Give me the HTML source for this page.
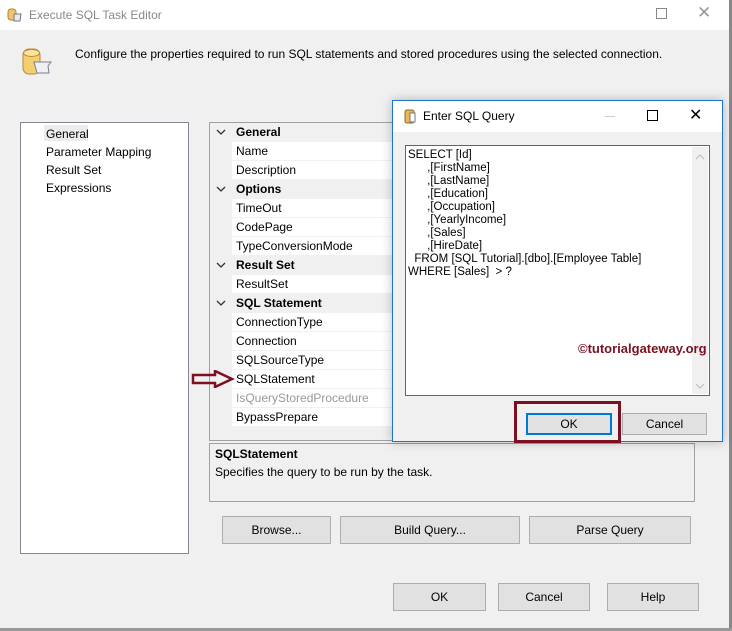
<!DOCTYPE html>
<html><head><style>
*{margin:0;padding:0;box-sizing:border-box}
body{width:732px;height:631px;background:#f0f0f0;font-family:"Liberation Sans",sans-serif;font-size:12px;color:#000;position:relative;overflow:hidden}
.a{position:absolute}
.btn{position:absolute;background:#e1e1e1;border:1px solid #adadad;text-align:center;font-size:12px}
.row{position:absolute;left:0;width:200px;height:19px;line-height:19px}
.cat{background:#f0f0f0;font-weight:bold;padding-left:26px}
.it{background:#fff;margin-left:22px;padding-left:4px;width:178px;border-bottom:1px solid #f0f0f0}
.chev{position:absolute;left:6px;top:6px}
</style></head><body>
<div class="a" style="left:0;top:0;width:732px;height:30px;background:#fff"></div>
<svg class="a" style="left:7px;top:7px" width="16" height="16"><rect x="1" y="2" width="8" height="11" rx="3" fill="#f0c868" stroke="#b08030"/><path d="M7 7h7l-1 7H7z" fill="#e8eaf0" stroke="#778"/></svg>
<div class="a" style="left:29px;top:8px;font-size:12px;color:#888">Execute SQL Task Editor</div>
<div class="a" style="left:656px;top:8px;width:11px;height:11px;border:1px solid #888"></div>
<div class="a" style="left:697px;top:3px;font-size:17px;color:#999">✕</div>
<div class="a" style="left:729px;top:0;width:3px;height:631px;background:#888"></div>
<div class="a" style="left:0;top:628px;width:732px;height:3px;background:#999"></div>
<svg class="a" style="left:22px;top:47px" width="32" height="32"><rect x="1" y="2" width="17" height="25" rx="6" fill="#f4cf70" stroke="#b88a3a"/><ellipse cx="9.5" cy="6" rx="8" ry="3.5" fill="#fae39a" stroke="#b88a3a"/><path d="M12 15h17l-3 4 1 7H15z" fill="#eef0f4" stroke="#7a8090"/></svg>
<div class="a" style="left:75px;top:47px;font-size:12px">Configure the properties required to run SQL statements and stored procedures using the selected connection.</div>
<div class="a" style="left:20px;top:122px;width:169px;height:432px;background:#fff;border:1px solid #828790"></div>
<div class="a" style="left:44px;top:125px;width:44px;height:16px;background:#ececec"></div>
<div class="a" style="left:46px;top:125px;line-height:18px">General<br>Parameter Mapping<br>Result Set<br>Expressions</div>
<div class="a" style="left:209px;top:122px;width:200px;height:319px;background:#f0f0f0;border:1px solid #a0a0a0;overflow:hidden">
<div class="row cat" style="top:0"><svg class="chev" width="10" height="7"><path d="M1 1l4 4 4-4" fill="none" stroke="#333" stroke-width="1.3"/></svg>General</div>
<div class="row it" style="top:19px">Name</div>
<div class="row it" style="top:38px">Description</div>
<div class="row cat" style="top:57px"><svg class="chev" width="10" height="7"><path d="M1 1l4 4 4-4" fill="none" stroke="#333" stroke-width="1.3"/></svg>Options</div>
<div class="row it" style="top:76px">TimeOut</div>
<div class="row it" style="top:95px">CodePage</div>
<div class="row it" style="top:114px">TypeConversionMode</div>
<div class="row cat" style="top:133px"><svg class="chev" width="10" height="7"><path d="M1 1l4 4 4-4" fill="none" stroke="#333" stroke-width="1.3"/></svg>Result Set</div>
<div class="row it" style="top:152px">ResultSet</div>
<div class="row cat" style="top:171px"><svg class="chev" width="10" height="7"><path d="M1 1l4 4 4-4" fill="none" stroke="#333" stroke-width="1.3"/></svg>SQL Statement</div>
<div class="row it" style="top:190px">ConnectionType</div>
<div class="row it" style="top:209px">Connection</div>
<div class="row it" style="top:228px">SQLSourceType</div>
<div class="row it" style="top:247px">SQLStatement</div>
<div class="row it" style="top:266px;color:#999">IsQueryStoredProcedure</div>
<div class="row it" style="top:285px">BypassPrepare</div>
</div>
<svg class="a" style="left:191px;top:370px" width="45" height="18"><path d="M2 5h22V1l17 8-17 8v-4H2z" fill="none" stroke="#7b1020" stroke-width="2.5"/></svg>
<div class="a" style="left:209px;top:443px;width:486px;height:59px;border:1px solid #a0a0a0;background:#f0f0f0"></div>
<div class="a" style="left:215px;top:447px;font-weight:bold">SQLStatement</div>
<div class="a" style="left:215px;top:465px">Specifies the query to be run by the task.</div>
<div class="btn" style="left:222px;top:516px;width:109px;height:28px;line-height:26px">Browse...</div>
<div class="btn" style="left:340px;top:516px;width:180px;height:28px;line-height:26px">Build Query...</div>
<div class="btn" style="left:529px;top:516px;width:162px;height:28px;line-height:26px">Parse Query</div>
<div class="btn" style="left:393px;top:583px;width:93px;height:28px;line-height:26px">OK</div>
<div class="btn" style="left:498px;top:583px;width:92px;height:28px;line-height:26px">Cancel</div>
<div class="btn" style="left:607px;top:583px;width:92px;height:28px;line-height:26px">Help</div>
<div class="a" style="left:392px;top:100px;width:331px;height:342px;background:#f0f0f0;border:1px solid #1c74cc;box-shadow:0 0 10px rgba(0,0,0,.25)">
<div class="a" style="left:0;top:0;width:329px;height:31px;background:#fff"></div>
<svg class="a" style="left:11px;top:8px" width="14" height="16"><rect x="1" y="1" width="9" height="13" rx="2" fill="#e8b850" stroke="#8a6a2a"/><rect x="6" y="4" width="5" height="9" fill="#fff" stroke="#777"/></svg>
<div class="a" style="left:30px;top:8px;font-size:12px">Enter SQL Query</div>
<div class="a" style="left:212px;top:15px;width:10px;height:1px;background:#ccc"></div>
<div class="a" style="left:254px;top:9px;width:11px;height:11px;border:1px solid #000"></div>
<div class="a" style="left:296px;top:4px;font-size:16px">✕</div>
<div class="a" style="left:12px;top:44px;width:305px;height:251px;background:#fff;border:1px solid #1c74cc"></div>
<div class="a" style="left:299px;top:46px;width:16px;height:247px;background:#f0f0f0"></div>
<svg class="a" style="left:302px;top:53px" width="10" height="6"><path d="M1 5l4-4 4 4" fill="none" stroke="#bbb"/></svg>
<svg class="a" style="left:302px;top:282px" width="10" height="6"><path d="M1 1l4 4 4-4" fill="none" stroke="#bbb"/></svg>
<pre class="a" style="left:15px;top:48px;font-family:'Liberation Sans',sans-serif;font-size:11.5px;line-height:13px;color:#000">SELECT [Id]
      ,[FirstName]
      ,[LastName]
      ,[Education]
      ,[Occupation]
      ,[YearlyIncome]
      ,[Sales]
      ,[HireDate]
  FROM [SQL Tutorial].[dbo].[Employee Table]
WHERE [Sales]  &gt; ?</pre>
<div class="a" style="left:185px;top:240px;font-weight:bold;font-size:13px;color:#7b1020">©tutorialgateway.org</div>
<div class="a" style="left:121px;top:300px;width:107px;height:42px;border:3px solid #7b1020"></div>
<div class="btn" style="left:133px;top:312px;width:86px;height:22px;line-height:18px;border:2px solid #0078d7">OK</div>
<div class="btn" style="left:229px;top:312px;width:85px;height:22px;line-height:20px">Cancel</div>
</div>
</body></html>
